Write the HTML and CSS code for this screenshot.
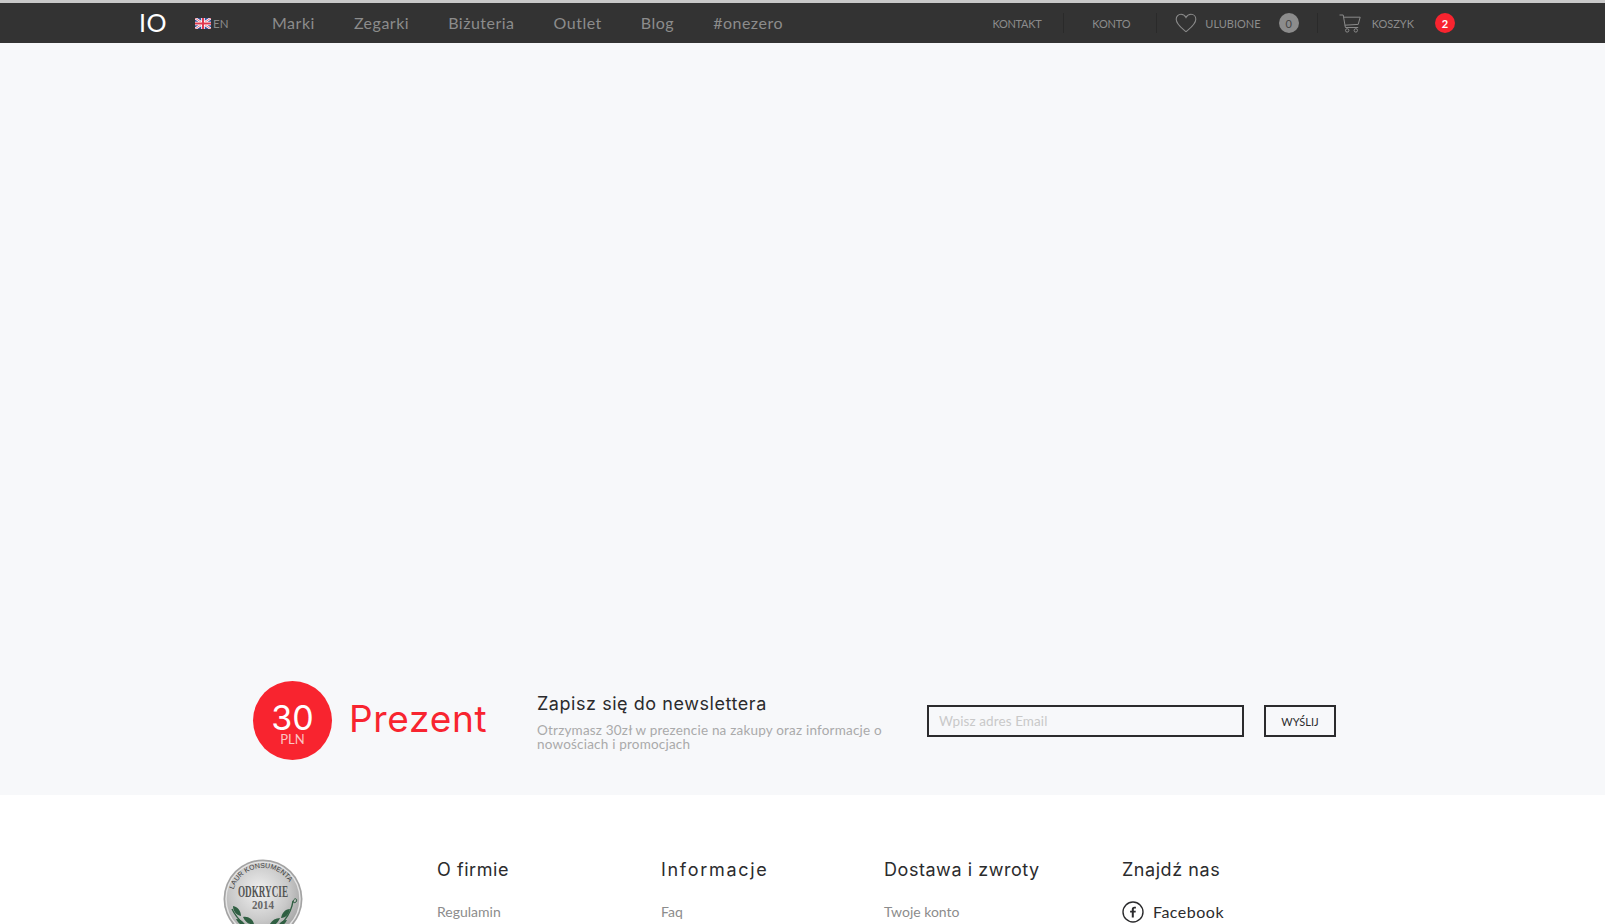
FILE: index.html
```html
<!DOCTYPE html>
<html>

<head>
    <title>OneZero</title>
    <link rel="stylesheet" href="styles.css">
</head>

<body>
    <header class="top-bar">
        <a class="logo">IO</a>
        <a class="lang">
            <svg class="flag" width="16" height="11" viewBox="0 0 16 11">
                <rect width="16" height="11" fill="#3a4f9c" />
                <path d="M0 0L16 11M16 0L0 11" stroke="#fff" stroke-width="2.4" />
                <path d="M0 0L16 11M16 0L0 11" stroke="#e0455c" stroke-width="0.8" />
                <path d="M8 0V11M0 5.5H16" stroke="#fff" stroke-width="3.6" />
                <path d="M8 0V11M0 5.5H16" stroke="#e0384f" stroke-width="2" />
            </svg>
            <span>EN</span>
        </a>
        <nav class="main-nav">
            <a>Marki</a>
            <a>Zegarki</a>
            <a>Biżuteria</a>
            <a>Outlet</a>
            <a>Blog</a>
            <a>#onezero</a>
        </nav>
        <div class="user-nav">
            <a class="user-link link-kontakt">KONTAKT</a>
            <a class="user-link link-konto">KONTO</a>
            <a class="user-link link-fav">
                <svg class="heart" width="22" height="20" viewBox="0 0 22 20">
                    <path d="M11 18.6C7 15.2 1.2 11.4 1.2 6.2C1.2 3.2 3.4 1.2 6 1.2C8 1.2 10 2.4 11 4.4C12 2.4 14 1.2 16 1.2C18.6 1.2 20.8 3.2 20.8 6.2C20.8 11.4 15 15.2 11 18.6Z" fill="none" stroke="#8a8a8a" stroke-width="1.1" />
                </svg>
                <span>ULUBIONE</span>
                <b class="badge badge-grey">0</b>
            </a>
            <a class="user-link link-cart">
                <svg class="cart" width="22" height="19" viewBox="0 0 22 19">
                    <path d="M0.5 1H4.2L6.4 13.5H19.2M4.8 3.2H21.2L19.2 10.4L5.8 11.2" fill="none" stroke="#8a8a8a" stroke-width="1" />
                    <circle cx="8.2" cy="16.4" r="1.7" fill="none" stroke="#8a8a8a" stroke-width="1" />
                    <circle cx="16.8" cy="16.4" r="1.7" fill="none" stroke="#8a8a8a" stroke-width="1" />
                </svg>
                <span>KOSZYK</span>
                <b class="badge badge-red">2</b>
            </a>
        </div>
    </header>

    <main class="content">
        <section class="newsletter">
            <div class="gift">
                <div class="gift-circle">
                    <span class="gift-amount">30</span>
                    <span class="gift-currency">PLN</span>
                </div>
                <span class="gift-label">Prezent</span>
            </div>
            <div class="newsletter-text">
                <h2>Zapisz się do newslettera</h2>
                <p>Otrzymasz 30zł w prezencie na zakupy oraz informacje o nowościach i promocjach</p>
            </div>
            <form class="newsletter-form">
                <input type="text" placeholder="Wpisz adres Email">
                <button type="button">WYŚLIJ</button>
            </form>
        </section>
    </main>

    <footer class="footer">
        <div class="footer-medal">
            <svg width="80" height="80" viewBox="0 0 80 80">
                <defs>
                    <radialGradient id="silver" cx="0.45" cy="0.4" r="0.65">
                        <stop offset="0" stop-color="#f1f1f1" />
                        <stop offset="0.6" stop-color="#c9c9c9" />
                        <stop offset="1" stop-color="#a0a0a0" />
                    </radialGradient>
                    <path id="medal-arc" d="M10.5 30.4A31 31 0 0 1 70 32" />
                </defs>
                <circle cx="40" cy="40" r="39.5" fill="#a3a3a3" />
                <circle cx="40" cy="40" r="37" fill="url(#silver)" stroke="#e4e4e4" stroke-width="1.5" />
                <text class="medal-arc-text" textLength="70"><textPath href="#medal-arc">LAUR KONSUMENTA</textPath></text>
                <text class="medal-title" x="40" y="38" text-anchor="middle" textLength="50" lengthAdjust="spacingAndGlyphs">ODKRYCIE</text>
                <text class="medal-year" x="40" y="50" text-anchor="middle" textLength="22" lengthAdjust="spacingAndGlyphs">2014</text>
                <path d="M9 50C14 60 22 68 34 73M70 42C68 56 58 68 46 73" fill="none" stroke="#2f5f42" stroke-width="1.4" />
                <path d="M70 42C72 38 75 40 73 43C72 44 70 44 70 42Z" fill="none" stroke="#2f5f42" stroke-width="1" />
                <path d="M10 47C15 48 18 52 18 57C13 56 10 52 10 47ZM20 58C25 57 30 60 31 65C26 66 22 63 20 58ZM13 60C17 60 20 62 22 66C18 67 15 64 13 60ZM67 50C62 50 59 54 58 59C63 59 66 55 67 50ZM57 59C52 59 48 62 46 67C51 68 55 64 57 59ZM64 61C60 61 57 63 55 67C59 68 62 65 64 61Z" fill="#2f5f42" />
            </svg>
        </div>
        <div class="footer-col col-firm">
            <h3>O firmie</h3>
            <a>Regulamin</a>
        </div>
        <div class="footer-col col-info">
            <h3>Informacje</h3>
            <a>Faq</a>
        </div>
        <div class="footer-col col-ship">
            <h3>Dostawa i zwroty</h3>
            <a>Twoje konto</a>
        </div>
        <div class="footer-col col-find">
            <h3>Znajdź nas</h3>
            <a class="social">
                <svg width="22" height="22" viewBox="0 0 22 22">
                    <circle cx="11" cy="11" r="10" fill="none" stroke="#2b2b2d" stroke-width="1.4" />
                    <path d="M11.8 16.6V11.6H13.6L13.8 9.7H11.8V8.5C11.8 7.9 12 7.5 12.8 7.5H13.9V5.8C13.6 5.8 13 5.7 12.3 5.7C10.8 5.7 9.8 6.6 9.8 8.3V9.7H8.1V11.6H9.8V16.6Z" fill="#2b2b2d" />
                </svg>
                <span>Facebook</span>
            </a>
        </div>
    </footer>
</body>

</html>
```

FILE: styles.css
```css
html, body {
    margin: 0;
    height: 924px;
    overflow: hidden;
}

body {
    background-color: #fff;
    font-family: "Lato", "Liberation Sans", sans-serif;
    color: #2b2b2d;
}

a {
    text-decoration: none;
}

.top-bar {
    display: flex;
    align-items: center;
    height: 40px;
    padding-left: 139px;
    background-color: #333333;
    border-top: 3px solid #c9c9c9;
}

.logo {
    width: 56px;
    margin-top: -2px;
    color: #fff;
    font-size: 25px;
    line-height: 40px;
    letter-spacing: 0.5px;
}

.lang {
    display: flex;
    align-items: center;
    gap: 2px;
    width: 77px;
    font-size: 11.5px;
    color: #8a8a8a;
}

.main-nav {
    display: flex;
    gap: 39px;
    margin-top: -2px;
    font-size: 16px;
    letter-spacing: 0.5px;
    color: #8c8c8c;
}

.user-nav {
    display: flex;
    align-items: center;
    margin-left: auto;
    margin-right: 150px;
    font-size: 11px;
    color: #8c8c8c;
}

.user-link {
    display: flex;
    align-items: center;
    height: 20px;
}

.link-kontakt {
    padding-right: 22px;
    border-right: 1px solid #2a2a2a;
    letter-spacing: -0.3px;
}

.link-konto {
    padding: 0 26px 0 28px;
    border-right: 1px solid #2a2a2a;
    letter-spacing: -0.2px;
}

.link-fav {
    padding: 0 18px;
    border-right: 1px solid #2a2a2a;
}

.link-cart {
    padding-left: 21px;
}

.heart {
    margin-right: 8px;
}

.cart {
    margin-right: 11px;
}

.badge {
    display: flex;
    align-items: center;
    justify-content: center;
    width: 20px;
    height: 20px;
    border-radius: 50%;
    font-size: 11px;
}

.badge-grey {
    margin-left: 18px;
    background-color: #8c8c8c;
    color: #444;
    font-weight: 400;
}

.badge-red {
    margin-left: 21px;
    background-color: #f8242f;
    color: #fff;
}

.content {
    height: 752px;
    background-color: #f7f8fa;
    box-sizing: border-box;
    padding-top: 639px;
}

.newsletter {
    display: flex;
    align-items: center;
    height: 78px;
    padding-left: 253px;
}

.gift {
    display: flex;
    align-items: center;
    gap: 17px;
    width: 284px;
    margin-top: -2px;
}

.gift-circle {
    display: flex;
    flex-direction: column;
    align-items: center;
    justify-content: center;
    box-sizing: border-box;
    width: 79px;
    height: 79px;
    padding-top: 8px;
    border-radius: 50%;
    background-color: #f8242f;
    color: #fff;
}

.gift-amount {
    font-family: "Inter", sans-serif;
    font-size: 34px;
    line-height: 27px;
}

.gift-currency {
    margin-top: 2px;
    font-size: 13px;
    line-height: 12px;
    color: #fbc4c4;
}

.gift-label {
    font-family: "Inter", sans-serif;
    font-size: 37px;
    line-height: 44px;
    margin-top: -2px;
    letter-spacing: 0.7px;
    color: #f8242f;
}

.newsletter-text {
    width: 352px;
    margin-top: 2px;
    margin-right: 38px;
}

.newsletter-text h2 {
    margin: 0 0 8px;
    font-family: "Inter", sans-serif;
    font-size: 18px;
    font-weight: 400;
    line-height: 22px;
    letter-spacing: 0.55px;
}

.newsletter-text p {
    margin: 0;
    font-size: 13.5px;
    line-height: 14px;
    letter-spacing: 0.2px;
    color: #aaaaaa;
}

.newsletter-form {
    display: flex;
    gap: 20px;
}

.newsletter-form input[type="text"] {
    box-sizing: border-box;
    width: 317px;
    height: 32px;
    padding: 0 10px;
    background-color: transparent;
    border: 2px solid #2b2b2d;
    font-family: "Lato", sans-serif;
    font-size: 13.5px;
    letter-spacing: 0.1px;
}

.newsletter-form input::placeholder {
    color: #c9c9c9;
}

.newsletter-form button {
    box-sizing: border-box;
    width: 72px;
    height: 32px;
    padding: 0;
    background-color: transparent;
    border: 2px solid #2b2b2d;
    color: #2b2b2d;
    font-family: "Lato", sans-serif;
    font-size: 11px;
}

.footer {
    display: flex;
    padding: 64px 0 0 223px;
}

.footer-medal {
    width: 214px;
}

.footer-col h3 {
    margin: 0 0 20px;
    font-family: "Inter", sans-serif;
    font-size: 18px;
    font-weight: 400;
    line-height: 22px;
    letter-spacing: 0.55px;
}

.footer-col a {
    display: block;
    font-size: 14px;
    line-height: 22px;
    color: #8c8c8c;
}

.col-firm {
    width: 224px;
}

.col-info {
    width: 223px;
}

.col-info h3 {
    letter-spacing: 1.7px;
}

.col-ship {
    width: 238px;
}

.footer-col .social {
    display: flex;
    align-items: center;
    gap: 9px;
    font-size: 16px;
    letter-spacing: 0.5px;
    color: #2b2b2d;
}

.medal-arc-text {
    font-family: "Liberation Sans", sans-serif;
    font-size: 7px;
    fill: #3a3a3a;
}

.medal-title {
    font-family: "Liberation Serif", serif;
    font-size: 16px;
    font-weight: 700;
    fill: #555;
}

.medal-year {
    font-family: "Liberation Serif", serif;
    font-size: 12px;
    font-weight: 700;
    fill: #666;
}
```
